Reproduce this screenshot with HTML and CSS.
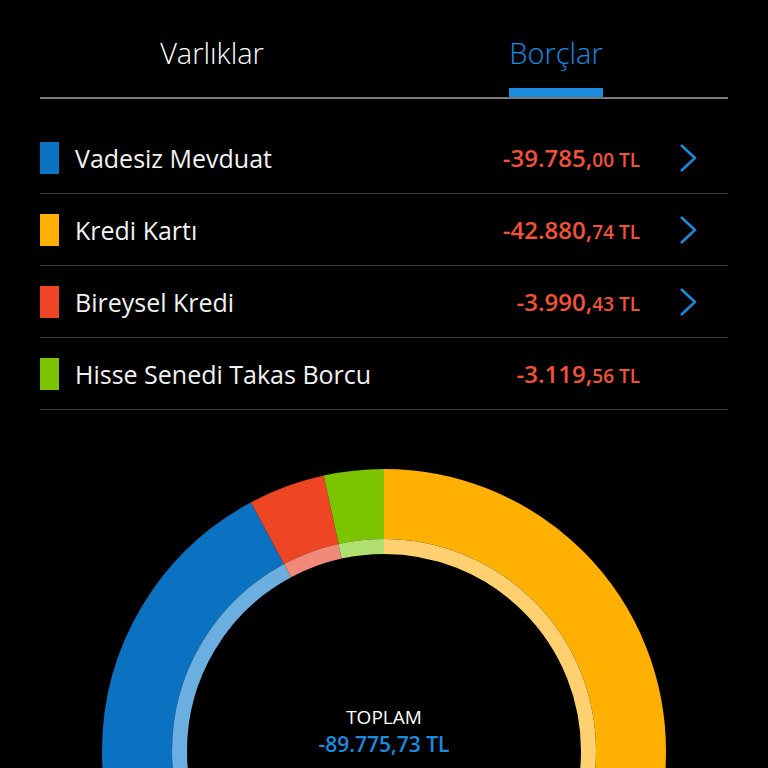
FILE: index.html
```html
<!DOCTYPE html>
<html lang="tr">

<head>
  <meta charset="UTF-8">
  <meta name="viewport" content="width=device-width, initial-scale=1.0">
  <title>Borçlar</title>
  <link rel="stylesheet" href="styles.css">
</head>

<body>
  <div class="tabs">
    <div class="tab">Varlıklar</div>
    <div class="tab active">Borçlar</div>
  </div>

  <ul class="list">
    <li>
      <span class="mark blue"></span>
      <span class="name">Vadesiz Mevduat</span>
      <span class="amount">-39.785,<small>00 TL</small></span>
      <span class="arrow"><svg width="20" height="30" viewBox="0 0 20 30"><path d="M3 2 L17 15 L3 28" fill="none" stroke="#1a8ce0" stroke-width="2.4"/></svg></span>
    </li>
    <li>
      <span class="mark yellow"></span>
      <span class="name">Kredi Kartı</span>
      <span class="amount">-42.880,<small>74 TL</small></span>
      <span class="arrow"><svg width="20" height="30" viewBox="0 0 20 30"><path d="M3 2 L17 15 L3 28" fill="none" stroke="#1a8ce0" stroke-width="2.4"/></svg></span>
    </li>
    <li>
      <span class="mark red"></span>
      <span class="name">Bireysel Kredi</span>
      <span class="amount">-3.990,<small>43 TL</small></span>
      <span class="arrow"><svg width="20" height="30" viewBox="0 0 20 30"><path d="M3 2 L17 15 L3 28" fill="none" stroke="#1a8ce0" stroke-width="2.4"/></svg></span>
    </li>
    <li>
      <span class="mark green"></span>
      <span class="name">Hisse Senedi Takas Borcu</span>
      <span class="amount">-3.119,<small>56 TL</small></span>
      <span class="arrow"></span>
    </li>
  </ul>

  <div class="chart">
    <svg width="564" height="564" viewBox="0 0 564 564">
      <g transform="rotate(-90 282 282)">
        <!-- outer band, r=247, circumference 1551.9 -->
        <circle cx="282" cy="282" r="247" fill="none" stroke="#ffb000" stroke-width="70"
          stroke-dasharray="741 1552" stroke-dashoffset="0"/>
        <circle cx="282" cy="282" r="247" fill="none" stroke="#0a72c0" stroke-width="70"
          stroke-dasharray="689 1552" stroke-dashoffset="-741"/>
        <circle cx="282" cy="282" r="247" fill="none" stroke="#ee4524" stroke-width="70"
          stroke-dasharray="68 1552" stroke-dashoffset="-1430"/>
        <circle cx="282" cy="282" r="247" fill="none" stroke="#7dc400" stroke-width="70"
          stroke-dasharray="54 1552" stroke-dashoffset="-1498"/>
        <!-- inner light band, r=204.5, circumference 1284.9 -->
        <circle cx="282" cy="282" r="204.5" fill="none" stroke="#ffd070" stroke-width="15"
          stroke-dasharray="614 1285" stroke-dashoffset="0"/>
        <circle cx="282" cy="282" r="204.5" fill="none" stroke="#6aafe0" stroke-width="15"
          stroke-dasharray="570 1285" stroke-dashoffset="-614"/>
        <circle cx="282" cy="282" r="204.5" fill="none" stroke="#f28a7a" stroke-width="15"
          stroke-dasharray="56 1285" stroke-dashoffset="-1184"/>
        <circle cx="282" cy="282" r="204.5" fill="none" stroke="#b0e070" stroke-width="15"
          stroke-dasharray="45 1285" stroke-dashoffset="-1240"/>
      </g>
    </svg>
    <div class="total">
      <div class="total-label">TOPLAM</div>
      <div class="total-value">-89.775,73 TL</div>
    </div>
  </div>
</body>

</html>
```

FILE: styles.css
```css
* {
  margin: 0;
  padding: 0;
  list-style: none;
  box-sizing: border-box;
}

html,
body {
  background: #000;
  height: 768px;
  overflow: hidden;
}

body {
  font-family: "Open Sans", "DejaVu Sans", sans-serif;
  color: #fff;
}

.tabs {
  display: flex;
  margin: 0 40px;
  padding-top: 33px;
  border-bottom: 2px solid #7a7a7a;
}

.tab {
  flex: 1;
  display: flex;
  flex-direction: column;
  align-items: center;
  font-size: 29px;
  font-weight: 300;
  line-height: 40px;
  height: 64px;
}

.tab.active {
  color: #1a8ce0;
}

.tab.active::after {
  content: '';
  display: block;
  width: 94px;
  height: 9px;
  margin-top: 15px;
  background: #1a8ce0;
}

.list {
  margin: 23px 40px 0;
}

.list li {
  display: flex;
  align-items: center;
  height: 72px;
  border-bottom: 1px solid #3c3c3c;
}

.mark {
  width: 19px;
  height: 32px;
  margin-right: 16px;
}

.mark.blue {
  background: #0a72c0;
}

.mark.yellow {
  background: #ffb000;
}

.mark.red {
  background: #ee4524;
}

.mark.green {
  background: #7dc400;
}

.name {
  flex: 1;
  font-size: 25px;
  font-weight: 400;
  color: #f2f2f2;
}

.amount {
  color: #f05438;
  font-size: 24px;
  font-weight: 600;
}

.amount small {
  font-size: 19px;
}

.arrow {
  width: 88px;
  display: flex;
  justify-content: center;
  padding-left: 8px;
}

.chart {
  position: relative;
  width: 564px;
  margin: 59px auto 0;
}

.chart svg {
  display: block;
}

.total {
  position: absolute;
  left: 0;
  right: 0;
  top: 235px;
  text-align: center;
}

.total-label {
  font-size: 19px;
  color: #fff;
}

.total-value {
  font-size: 21px;
  color: #1a8ce0;
  font-weight: 600;
}
```
